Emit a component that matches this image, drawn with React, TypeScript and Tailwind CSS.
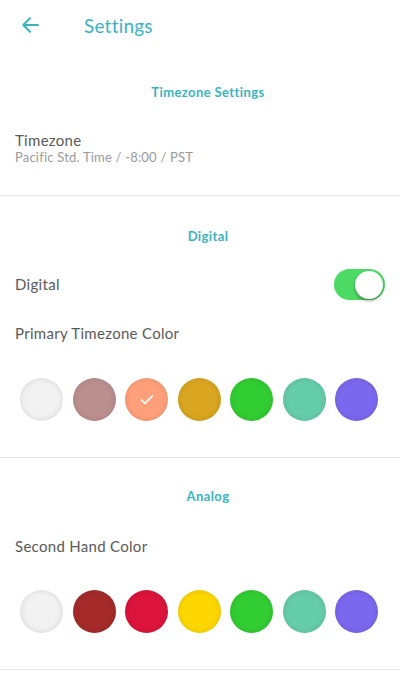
import { Check } from "lucide-react";

const primaryColors = ["#f2f2f2", "#bc8f8f", "#ffa07a", "#daa520", "#32cd32", "#66cdaa", "#7b68ee"];
const secondColors = ["#f2f2f2", "#a52a2a", "#dc143c", "#ffd700", "#32cd32", "#66cdaa", "#7b68ee"];

function ColorRow({ colors, selected }: { colors: string[]; selected?: number }) {
  return (
    <div className="flex justify-between pl-[20px] pr-[22px]">
      {colors.map((c, i) => (
        <div
          key={i}
          className="w-[43px] h-[43px] rounded-full flex items-center justify-center shadow-[inset_0_0_6px_rgba(0,0,0,0.12)]"
          style={{ backgroundColor: c }}
        >
          {selected === i && <Check size={16} strokeWidth={2.5} className="text-white" />}
        </div>
      ))}
    </div>
  );
}

function SectionTitle({ children }: { children: string }) {
  return (
    <div className="h-[16px] leading-[16px] pl-[16px] text-center text-[13px] tracking-[0.4px] font-bold text-[#3ab3c1]">
      {children}
    </div>
  );
}

export default function App() {
  return (
    <div className="w-[400px] h-[689px] bg-white font-['Lato','Open_Sans',sans-serif] text-[#5a5a5a] overflow-hidden">
      {/* header */}
      <div className="h-[50px] flex items-center">
        <div className="w-[84px] pl-[22px] flex items-center">
          <svg width="17" height="16" viewBox="0 0 17 16" fill="none" stroke="#3ab3c1" strokeWidth="2" strokeLinecap="round" strokeLinejoin="round">
            <path d="M16 8H1.5M8 1.2L1.3 8L8 14.8" />
          </svg>
        </div>
        <div className="text-[19px] tracking-[0.2px] text-[#3ab3c1] leading-none">Settings</div>
      </div>

      {/* timezone */}
      <div className="pt-[34px] pb-[30px] border-b border-[#e6e6e6]">
        <SectionTitle>Timezone Settings</SectionTitle>
        <div className="px-[15px] mt-[30px]">
          <div className="text-[15px] tracking-[0.3px] leading-[20px]">Timezone</div>
          <div className="text-[13px] tracking-[0.2px] leading-[15px] text-[#9a9a9a]">Pacific Std. Time / -8:00 / PST</div>
        </div>
      </div>

      {/* digital */}
      <div className="pt-[32px] pb-[36px] border-b border-[#e6e6e6]">
        <SectionTitle>Digital</SectionTitle>
        <div className="mt-[25px] px-[15px] flex items-center justify-between h-[31px]">
          <div className="text-[15px] tracking-[0.3px]">Digital</div>
          <div className="w-[51px] h-[31px] rounded-full bg-[#4cd964] flex items-center justify-end pr-[2px]">
            <div className="w-[28px] h-[28px] rounded-full bg-white shadow-[0_2px_3px_rgba(0,0,0,0.35)]" />
          </div>
        </div>
        <div className="mt-[23px] px-[15px] text-[15px] tracking-[0.3px] leading-[20px]">Primary Timezone Color</div>
        <div className="mt-[35px]">
          <ColorRow colors={primaryColors} selected={2} />
        </div>
      </div>

      {/* analog */}
      <div className="pt-[30px] pb-[36px] border-b border-[#e6e6e6]">
        <SectionTitle>Analog</SectionTitle>
        <div className="mt-[32px] px-[15px] text-[15px] tracking-[0.3px] leading-[20px]">Second Hand Color</div>
        <div className="mt-[34px]">
          <ColorRow colors={secondColors} />
        </div>
      </div>
    </div>
  );
}
